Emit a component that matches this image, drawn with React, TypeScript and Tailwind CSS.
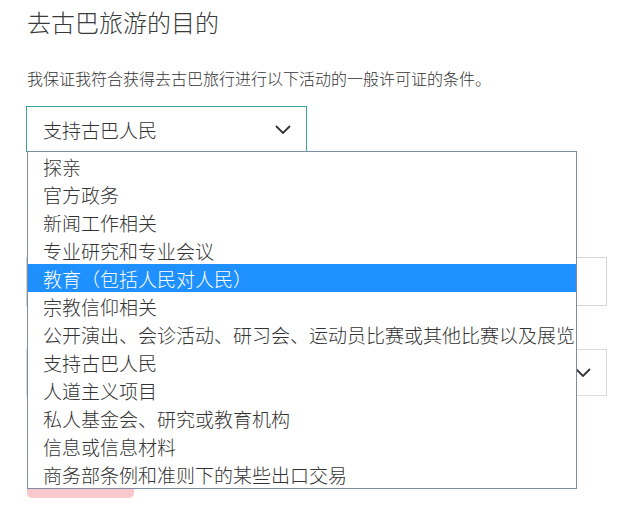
import React from "react";

const options = [
  "探亲",
  "官方政务",
  "新闻工作相关",
  "专业研究和专业会议",
  "教育（包括人民对人民）",
  "宗教信仰相关",
  "公开演出、会诊活动、研习会、运动员比赛或其他比赛以及展览",
  "支持古巴人民",
  "人道主义项目",
  "私人基金会、研究或教育机构",
  "信息或信息材料",
  "商务部条例和准则下的某些出口交易",
];

function Chevron({ className }: { className?: string }) {
  return (
    <svg className={className} width="16" height="9" viewBox="0 0 16 9" fill="none">
      <polyline points="1,1 8,8 15,1" stroke="#333" strokeWidth="1.8" fill="none" />
    </svg>
  );
}

export default function App() {
  return (
    <div
      className="relative w-[620px] h-[512px] overflow-hidden bg-white text-[#333] font-light"
      style={{ fontFamily: '"Noto Sans CJK SC", "Noto Sans", sans-serif' }}
    >
      <div className="flex flex-col pl-[26px]">
        <div className="h-[44px] flex items-center text-[24px] leading-none pl-[1px] text-[#3a3a3a]">去古巴旅游的目的</div>
        <div className="mt-[22px] h-[24px] flex items-center text-[16px] leading-none pl-[1px]">
          我保证我符合获得去古巴旅行进行以下活动的一般许可证的条件。
        </div>
        <div className="mt-[16px] w-[281px] h-[46px] border border-[#3aa39f] flex items-center justify-between pl-[16px] pr-[15px]">
          <span className="text-[19px] leading-none">支持古巴人民</span>
          <Chevron />
        </div>
        <div className="mt-[105px] w-[581px] h-[49px] border border-[#d4d4d4]" />
        <div className="mt-[43px] w-[581px] h-[47px] border border-[#dcdcdc] flex items-center justify-end pr-[15px]">
          <Chevron />
        </div>
        <div className="mt-[54px] ml-[1px] w-[107px] h-[48px] rounded-[5px] bg-[#f9c8cd]" />
      </div>

      <div className="absolute left-[27px] top-[151px] w-[550px] border border-[#7d8ca3] bg-white">
        {options.map((o, i) => (
          <div
            key={i}
            className={
              i === 4
                ? "h-[28px] flex items-center pl-[15px] text-[19px] leading-none whitespace-nowrap bg-[#1e90ff] text-white"
                : "h-[28px] flex items-center pl-[15px] text-[19px] leading-none whitespace-nowrap text-[#333]"
            }
          >
            {o}
          </div>
        ))}
      </div>
    </div>
  );
}
